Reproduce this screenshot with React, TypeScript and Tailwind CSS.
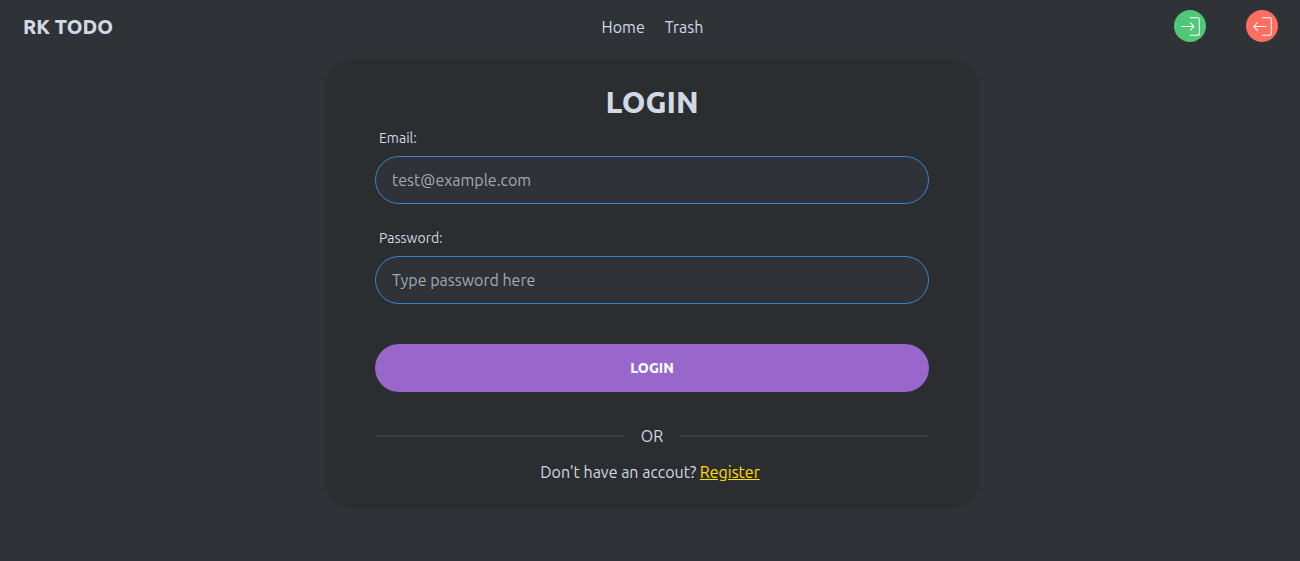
import { CiLogin, CiLogout } from "react-icons/ci";

function Field({ id, label, type, placeholder }: { id: string; label: string; type: string; placeholder: string }) {
  return (
    <div className="flex flex-col">
      <label htmlFor={id} className="px-1 py-2 text-sm leading-5">
        {label}
      </label>
      <input
        id={id}
        type={type}
        placeholder={placeholder}
        className="h-12 w-full rounded-full border border-[#3b82ce] bg-[#2f3337] px-4 text-base outline-none placeholder:text-[#a1a8b3]"
      />
    </div>
  );
}

export default function App() {
  return (
    <div className="min-h-screen bg-[#2f3337] font-['Ubuntu','Noto_Sans',sans-serif] text-[#d0d9e4]">
      <header className="grid grid-cols-[1fr_auto_1fr] items-center pt-[10px] pr-[22px] pb-[17px] pl-[23px]">
        <a href="#" className="pt-0.5 text-xl leading-7 font-extrabold">
          RK TODO
        </a>
        <nav className="flex gap-5 pt-0.5 pl-1">
          <a href="#home">Home</a>
          <a href="#trash">Trash</a>
        </nav>
        <div className="flex justify-end gap-10">
          <button type="button" aria-label="Log in" className="flex size-8 items-center justify-center rounded-full bg-[#50c878] pl-px text-white">
            <CiLogin size={25} />
          </button>
          <button type="button" aria-label="Log out" className="flex size-8 items-center justify-center rounded-full bg-[#ff6f61] pl-px text-white">
            <CiLogout size={25} />
          </button>
        </div>
      </header>
      <main className="pl-1">
        <section className="mx-auto w-full max-w-[654px] rounded-[28px] bg-[#2b2e30] px-[50px] pt-[25px] pb-[25px]">
          <h1 className="text-center text-3xl leading-9 font-extrabold">LOGIN</h1>
          <form className="flex flex-col" onSubmit={(e) => e.preventDefault()}>
            <div className="flex flex-col gap-4">
              <Field id="email" label="Email:" type="email" placeholder="test@example.com" />
              <Field id="password" label="Password:" type="password" placeholder="Type password here" />
            </div>
            <button type="submit" className="mt-10 h-12 rounded-full bg-[#9966cc] text-sm font-extrabold text-white">
              LOGIN
            </button>
          </form>
          <div className="mt-8 flex items-center gap-4 leading-6">
            <span className="h-0.5 flex-1 bg-[#3b3f42]" />
            OR
            <span className="h-0.5 flex-1 bg-[#3b3f42]" />
          </div>
          <p className="mt-3 pr-1 text-center leading-6">
            Don't have an accout?{" "}
            <a href="#register" className="text-[#ffdf00] underline">
              Register
            </a>
          </p>
        </section>
      </main>
    </div>
  );
}
